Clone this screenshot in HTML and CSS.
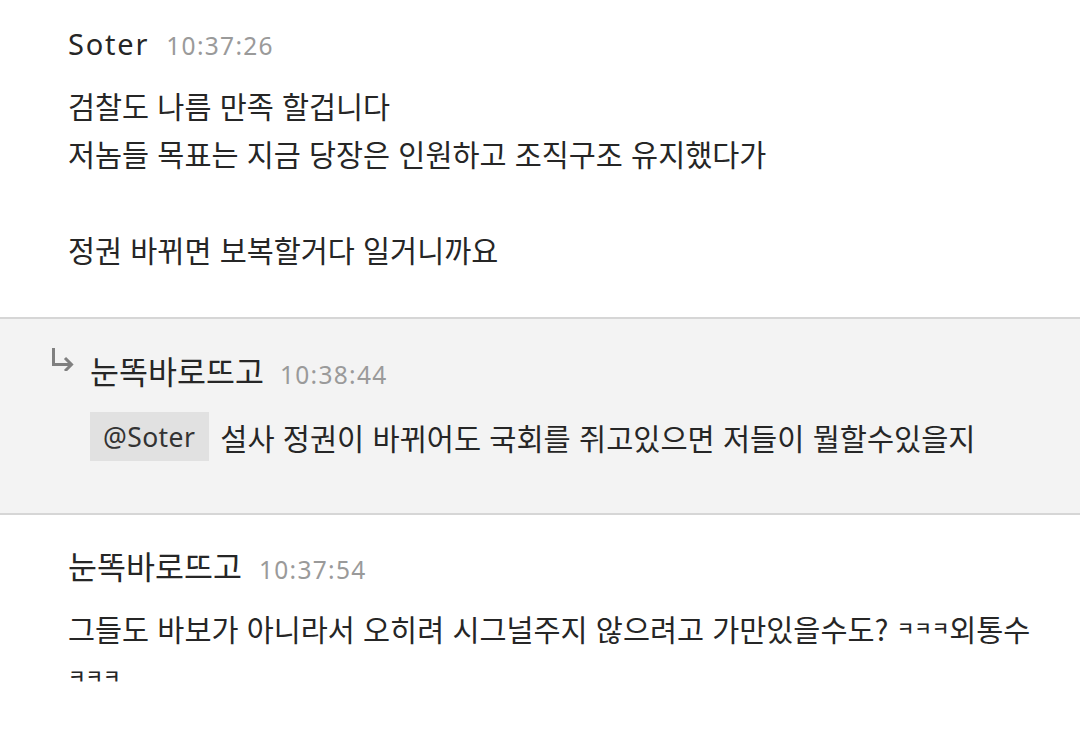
FILE: index.html
```html
<!DOCTYPE html>
<html lang="ko">
<head>
<meta charset="utf-8">
<link rel="stylesheet" href="styles.css">
</head>
<body>
<div class="feed">
  <section class="msg first">
    <div class="head"><span class="name latin">Soter</span><span class="time">10:37:26</span></div>
    <div class="body">
      <p>검찰도 나름 만족 할겁니다</p>
      <p>저놈들 목표는 지금 당장은 인원하고 조직구조 유지했다가</p>
      <p>&nbsp;</p>
      <p>정권 바뀌면 보복할거다 일거니까요</p>
    </div>
  </section>
  <section class="msg reply">
    <div class="head">
      <svg class="arrow" width="24" height="26" viewBox="0 0 24 26" aria-hidden="true">
        <path d="M3.5 3 V19.5 H21" fill="none" stroke="#808080" stroke-width="3"/>
        <path d="M15 13 L21.5 19.5 L15 26" fill="none" stroke="#808080" stroke-width="3"/>
      </svg>
      <span class="name">눈똑바로뜨고</span><span class="time">10:38:44</span>
    </div>
    <div class="row">
      <span class="mention">@Soter</span><span class="text">설사 정권이 바뀌어도 국회를 쥐고있으면 저들이 뭘할수있을지</span>
    </div>
  </section>
  <section class="msg last">
    <div class="head"><span class="name">눈똑바로뜨고</span><span class="time">10:37:54</span></div>
    <div class="body">
      <p>그들도 바보가 아니라서 오히려 시그널주지 않으려고 가만있을수도? <span class="kk">ㅋㅋㅋ</span>외통수</p>
      <p><span class="kk">ㅋㅋㅋ</span></p>
    </div>
  </section>
</div>
</body>
</html>
```
FILE: styles.css
```css
html, body {
  margin: 0;
  padding: 0;
  background: #ffffff;
}
body {
  font-family: "Noto Sans CJK KR", "Noto Sans", sans-serif;
  color: #262626;
  width: 1080px;
  height: 737px;
  overflow: hidden;
}
.feed {
  display: flex;
  flex-direction: column;
}
.msg {
  padding-left: 68px;
}
.first {
  padding-top: 21px;
  padding-bottom: 44px;
}
.msg p {
  margin: 0;
  font-size: 29.4px;
  line-height: 48px;
}
.head {
  display: flex;
  align-items: baseline;
  gap: 17px;
  height: 46px;
  line-height: 46px;
}
.name {
  font-size: 31.5px;
  color: #262626;
}
.name.latin {
  font-family: "Noto Sans", sans-serif;
  font-size: 29px;
  font-weight: 400;
  letter-spacing: 1.8px;
}
.time {
  font-family: "Noto Sans", sans-serif;
  font-size: 24.5px;
  letter-spacing: 1.3px;
  color: #9a9a9a;
}
.body {
  margin-top: 14px;
}
.reply {
  background: #f3f3f3;
  border-top: 2px solid #d6d6d6;
  border-bottom: 2px solid #d6d6d6;
  padding: 28px 0 52px 48px;
}
.arrow {
  align-self: flex-start;
  margin-top: -2px;
  margin-left: 2px;
  flex: none;
}
.reply .head {
  gap: 16px;
}
.row {
  display: flex;
  align-items: center;
  gap: 11px;
  margin-left: 42px;
  margin-top: 19px;
  height: 49px;
}
.text {
  font-size: 29.5px;
}
.mention {
  background: #e1e1e1;
  padding: 0 14px 0 13px;
  height: 49px;
  box-sizing: border-box;
  display: flex;
  align-items: center;
  font-family: "Noto Sans", sans-serif;
  font-size: 26.5px;
  letter-spacing: 0.4px;
  color: #333333;
}
.last {
  padding-top: 27px;
}
.last .body {
  margin-top: 16px;
}
.kk {
  font-size: 19px;
  font-weight: 500;
  vertical-align: 5px;
}
```
